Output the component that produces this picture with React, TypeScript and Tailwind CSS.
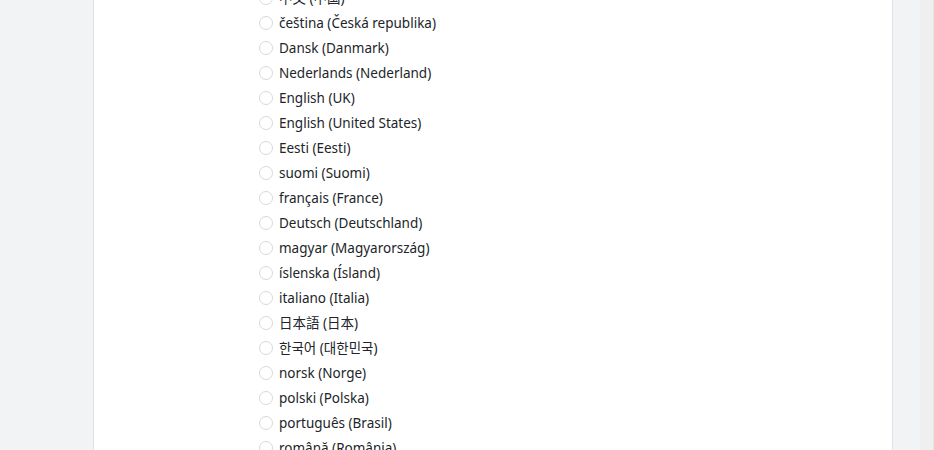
import React from "react";

const langs = [
  "中文 (中国)",
  "čeština (Česká republika)",
  "Dansk (Danmark)",
  "Nederlands (Nederland)",
  "English (UK)",
  "English (United States)",
  "Eesti (Eesti)",
  "suomi (Suomi)",
  "français (France)",
  "Deutsch (Deutschland)",
  "magyar (Magyarország)",
  "íslenska (Ísland)",
  "italiano (Italia)",
  "日本語 (日本)",
  "한국어 (대한민국)",
  "norsk (Norge)",
  "polski (Polska)",
  "português (Brasil)",
  "română (România)",
];

export default function App() {
  return (
    <div
      className="flex h-[450px] w-[934px] overflow-hidden bg-[#f2f3f5]"
      style={{ fontFamily: '"Noto Sans", "Noto Sans CJK SC", "Noto Sans CJK KR", "Noto Sans CJK JP", sans-serif' }}
    >
      <div className="w-[93px] shrink-0" />
      <div className="w-[800px] shrink-0 border-x border-[#dfe2e6] bg-white">
        <div className="mt-[-15px] flex flex-col pl-[165px]">
          {langs.map((l) => (
            <label key={l} className="flex h-[25px] items-center gap-[6px]">
              <span className="h-[14px] w-[14px] shrink-0 rounded-full border border-[#d6d9dd] bg-white" />
              <span className="pt-[2px] text-[13.5px] leading-none text-[#212529]">{l}</span>
            </label>
          ))}
        </div>
      </div>
      <div className="w-[27px] shrink-0" />
      <div className="flex-1 border-r border-[#e6e6e6] bg-[#efefef]" />
    </div>
  );
}
